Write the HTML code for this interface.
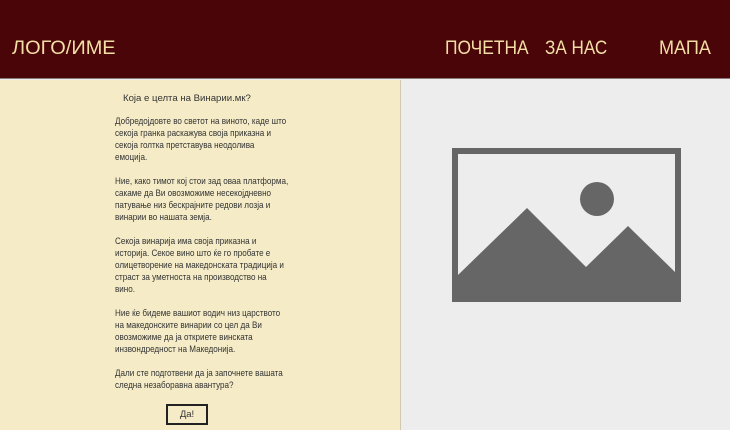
<!DOCTYPE html>
<html><head><meta charset="utf-8"><style>
*{margin:0;padding:0;box-sizing:border-box}
body{width:730px;height:430px;overflow:hidden;font-family:"Liberation Sans",sans-serif;position:relative;background:#ededed}
.hdr{position:absolute;left:0;top:0;width:730px;height:79px;background:#4a0508;border-bottom:1px solid #8a7a7a}
.nav{position:absolute;top:38px;color:#f3dfa6;font-size:19px;transform-origin:left top;white-space:nowrap;line-height:22px}
.left{position:absolute;left:0;top:80px;width:401px;height:350px;background:#f5ecc7;border-right:1px solid #d0c8b0}
.title{position:absolute;left:123px;top:93px;font-size:9.6px;line-height:12px;color:#333;white-space:nowrap}
.txt{position:absolute;left:115px;top:115px;width:230px;font-size:9.2px;line-height:12px;color:#333;white-space:nowrap;transform:scaleX(0.88);transform-origin:left top}
.txt p{margin-bottom:12px}
.btn{position:absolute;left:166px;top:404px;width:42px;height:21px;border:2px solid #222;font-size:9.5px;color:#333;text-align:center;line-height:17px}
</style></head><body>
<div class="hdr"></div>
<div class="nav" style="left:12px;transform:scaleX(1.05)">ЛОГО/ИМЕ</div>
<div class="nav" style="left:445px;transform:scaleX(0.915)">ПОЧЕТНА</div>
<div class="nav" style="left:545px;transform:scaleX(0.9)">ЗА НАС</div>
<div class="nav" style="left:659px;transform:scaleX(0.95)">МАПА</div>
<div class="left"></div>
<div class="title">Која е целта на Винарии.мк?</div>
<div class="txt">
<p>Добредојдовте во светот на виното, каде што<br>секоја гранка раскажува своја приказна и<br>секоја голтка претставува неодолива<br>емоција.</p>
<p>Ние, како тимот кој стои зад оваа платформа,<br>сакаме да Ви овозможиме несекојдневно<br>патување низ бескрајните редови лозја и<br>винарии во нашата земја.</p>
<p>Секоја винарија има своја приказна и<br>историја. Секое вино што ќе го пробате е<br>олицетворение на македонската традиција и<br>страст за уметноста на производство на<br>вино.</p>
<p>Ние ќе бидеме вашиот водич низ царството<br>на македонските винарии со цел да Ви<br>овозможиме да ја откриете винската<br>инзвондредност на Македонија.</p>
<p>Дали сте подготвени да ја започнете вашата<br>следна незаборавна авантура?</p>
</div>
<div class="btn">Да!</div>
<svg style="position:absolute;left:0;top:0" width="730" height="430">
<rect x="455" y="151" width="223" height="148" fill="none" stroke="#666" stroke-width="6"/>
<circle cx="597" cy="199" r="17" fill="#666"/>
<polygon points="458,275 527,208 586,267 628,226 675,272 675,299 458,299" fill="#666"/>
</svg>
</body></html>
